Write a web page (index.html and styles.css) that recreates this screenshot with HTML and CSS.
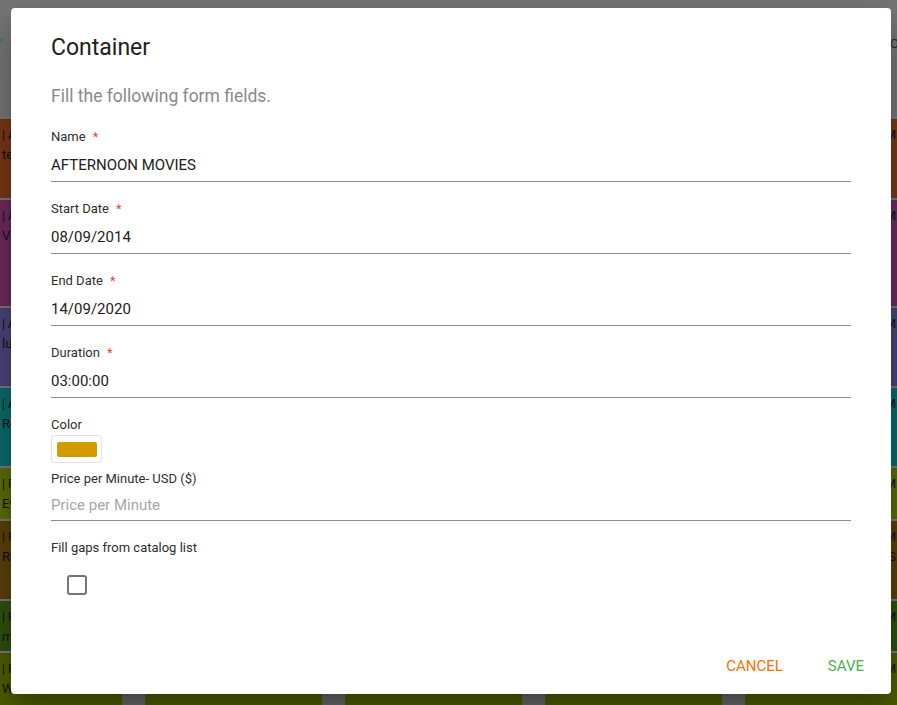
FILE: index.html
```html
<!DOCTYPE html>
<html lang="en">
<head>
<meta charset="utf-8">
<title>Container</title>
<link rel="stylesheet" href="styles.css">
</head>
<body>
<div class="app">
  <header class="topbar">
    <span class="top-left">'</span>
    <span class="top-right">O</span>
  </header>
  <div class="schedule">
    <div class="band band-brown">
      <div class="event"><span class="ev-title">| AFTERNOON</span><span class="ev-sub">tea time</span></div>
      <div class="event"></div><div class="event"></div><div class="event"></div>
      <div class="event ev-right"><span class="ev-time">AM</span></div>
    </div>
    <div class="band band-purple">
      <div class="event"><span class="ev-title">| AFTERNOON</span><span class="ev-sub">Variety</span></div>
      <div class="event"></div><div class="event"></div><div class="event"></div>
      <div class="event ev-right"><span class="ev-time">AM</span></div>
    </div>
    <div class="band band-indigo">
      <div class="event"><span class="ev-title">| AFTERNOON</span><span class="ev-sub">lunch</span></div>
      <div class="event"></div><div class="event"></div><div class="event"></div>
      <div class="event ev-right"><span class="ev-time">AM</span></div>
    </div>
    <div class="band band-teal">
      <div class="event"><span class="ev-title">| AFTERNOON</span><span class="ev-sub">Reruns</span></div>
      <div class="event"></div><div class="event"></div><div class="event"></div>
      <div class="event ev-right"><span class="ev-time">AM</span></div>
    </div>
    <div class="band band-olive">
      <div class="event"><span class="ev-title">| PRIME</span><span class="ev-sub">Evening</span></div>
      <div class="event"></div><div class="event"></div><div class="event"></div>
      <div class="event ev-right"><span class="ev-time">PM</span></div>
    </div>
    <div class="band band-brown2">
      <div class="event"><span class="ev-title">| PRIME</span><span class="ev-sub">Reality</span></div>
      <div class="event"></div><div class="event"></div><div class="event"></div>
      <div class="event ev-right"><span class="ev-time">PM</span><span class="ev-time">S</span></div>
    </div>
    <div class="band band-green">
      <div class="event"><span class="ev-title">| PRIME</span><span class="ev-sub">movies</span></div>
      <div class="event"></div><div class="event"></div><div class="event"></div>
      <div class="event ev-right"><span class="ev-time">PM</span></div>
    </div>
    <div class="band band-olive2">
      <div class="event"><span class="ev-title">| PRIME</span><span class="ev-sub">Weekend</span></div>
      <div class="event"></div><div class="event"></div><div class="event"></div>
      <div class="event ev-right"><span class="ev-time">PM</span></div>
    </div>
  </div>
</div>

<div class="dialog" role="dialog" aria-labelledby="dlg-title">
  <h2 class="dialog-title" id="dlg-title">Container</h2>
  <p class="dialog-subtitle">Fill the following form fields.</p>

  <div class="form">
    <div class="field">
      <label class="field-label">Name<span class="req">*</span></label>
      <div class="field-input">AFTERNOON MOVIES</div>
    </div>
    <div class="field">
      <label class="field-label">Start Date<span class="req">*</span></label>
      <div class="field-input">08/09/2014</div>
    </div>
    <div class="field">
      <label class="field-label">End Date<span class="req">*</span></label>
      <div class="field-input">14/09/2020</div>
    </div>
    <div class="field">
      <label class="field-label">Duration<span class="req">*</span></label>
      <div class="field-input">03:00:00</div>
    </div>
    <div class="field field-color">
      <label class="field-label">Color</label>
      <div class="color-box"><span class="color-swatch"></span></div>
    </div>
    <div class="field field-price">
      <label class="field-label">Price per Minute- USD ($)</label>
      <div class="field-input placeholder">Price per Minute</div>
    </div>
    <div class="field field-check">
      <label class="field-label">Fill gaps from catalog list</label>
      <span class="checkbox"></span>
    </div>
  </div>

  <div class="actions">
    <button class="btn btn-cancel">CANCEL</button>
    <button class="btn btn-save">SAVE</button>
  </div>
</div>
</body>
</html>
```

FILE: styles.css
```css
* { box-sizing: border-box; }

html, body {
  margin: 0;
  padding: 0;
  width: 897px;
  height: 705px;
  overflow: hidden;
  font-family: Roboto, "Liberation Sans", sans-serif;
}

body { position: relative; background: #767676; }

/* ---------- background app (dimmed) ---------- */
.app {
  display: flex;
  flex-direction: column;
  height: 705px;
}

.topbar {
  height: 118px;
  background: #777777;
  display: flex;
  justify-content: space-between;
  align-items: flex-start;
  padding-top: 36px;
  font-size: 14px;
}
.top-left { color: #2a6f9a; font-weight: 700; }
.top-right { color: #2b2b3a; margin-right: -2px; font-size: 13px; }

.schedule {
  flex: 1;
  display: flex;
  flex-direction: column;
}

.band {
  display: flex;
  gap: 23px;
  border-top: 2px solid #7a7a7a;
  background: #6a6a6a;
}
.band-brown  { height: 81px; }
.band-purple { height: 108px; }
.band-indigo { height: 80px; }
.band-teal   { height: 80px; }
.band-olive  { height: 53px; }
.band-brown2 { height: 80px; }
.band-green  { height: 52px; }
.band-olive2 { flex: 1; }

.event {
  display: flex;
  flex-direction: column;
  padding: 6px 2px;
  font-size: 13px;
  line-height: 20px;
  color: #111;
  white-space: nowrap;
  overflow: hidden;
}
.event:nth-child(1) { width: 122px; }
.event:nth-child(2),
.event:nth-child(3),
.event:nth-child(4) { width: 177px; }
.event:nth-child(5) { flex: 1; }
.ev-right { align-items: flex-end; padding-right: 1px; }

.band-brown  .event { background: #793818; }
.band-purple .event { background: #6c2c5c; }
.band-indigo .event { background: #4a4579; }
.band-teal   .event { background: #0c6b6b; }
.band-olive  .event { background: #5b6d0c; }
.band-brown2 .event { background: #5b420a; }
.band-green  .event { background: #30520f; }
.band-olive2 .event { background: #4f5e02; }

.ev-title { font-size: 12px; }

/* ---------- dialog ---------- */
.dialog {
  position: absolute;
  left: 11px;
  top: 8px;
  width: 880px;
  height: 686px;
  background: #ffffff;
  border-radius: 4px;
  box-shadow: 0 11px 15px -7px rgba(0,0,0,.2), 0 24px 38px 3px rgba(0,0,0,.14), 0 9px 46px 8px rgba(0,0,0,.12);
  padding: 26px 40px 0 40px;
  display: flex;
  flex-direction: column;
}

.dialog-title {
  margin: 0;
  font-size: 23px;
  line-height: 28px;
  font-weight: 400;
  color: #212121;
}

.dialog-subtitle {
  margin: 22px 0 0 0;
  font-size: 17.5px;
  line-height: 24px;
  color: #8a8a8a;
}

.form {
  margin-top: 21px;
  display: flex;
  flex-direction: column;
}

.field { display: flex; flex-direction: column; margin-bottom: 19px; }

.field-label {
  font-size: 13px;
  line-height: 16px;
  font-weight: 400;
  color: #2e2e2e;
}
.req { color: #f44336; margin-left: 7px; font-weight: 400; }

.field-input {
  margin-top: 10px;
  font-size: 15px;
  line-height: 20px;
  color: #212121;
  padding-bottom: 6px;
  border-bottom: 1px solid #8c8c8c;
}
.field-input.placeholder { color: #a6a6a6; }

.field-color { margin-bottom: 8px; }
.color-box {
  margin-top: 2px;
  width: 51px;
  height: 28px;
  border: 1px solid #e3e3e3;
  border-radius: 3px;
  display: flex;
  align-items: center;
  justify-content: center;
}
.color-swatch {
  width: 40px;
  height: 15px;
  border-radius: 2px;
  background: #d09c00;
}

.field-price { margin-bottom: 19px; }
.field-price .field-input { margin-top: 8px; padding-bottom: 5px; }

.checkbox {
  margin: 19px 0 0 16px;
  width: 20px;
  height: 20px;
  border: 2px solid #757575;
  border-radius: 3px;
}

.actions {
  margin-top: auto;
  margin-right: -27px;
  padding-bottom: 11px;
  display: flex;
  justify-content: flex-end;
  gap: 17px;
}

.btn {
  background: none;
  border: none;
  font-family: Roboto, "Liberation Sans", sans-serif;
  font-size: 15px;
  line-height: 20px;
  padding: 7px 14px;
  cursor: pointer;
}
.btn-cancel { color: #ff6d00; }
.btn-save { color: #4caf50; }
```
